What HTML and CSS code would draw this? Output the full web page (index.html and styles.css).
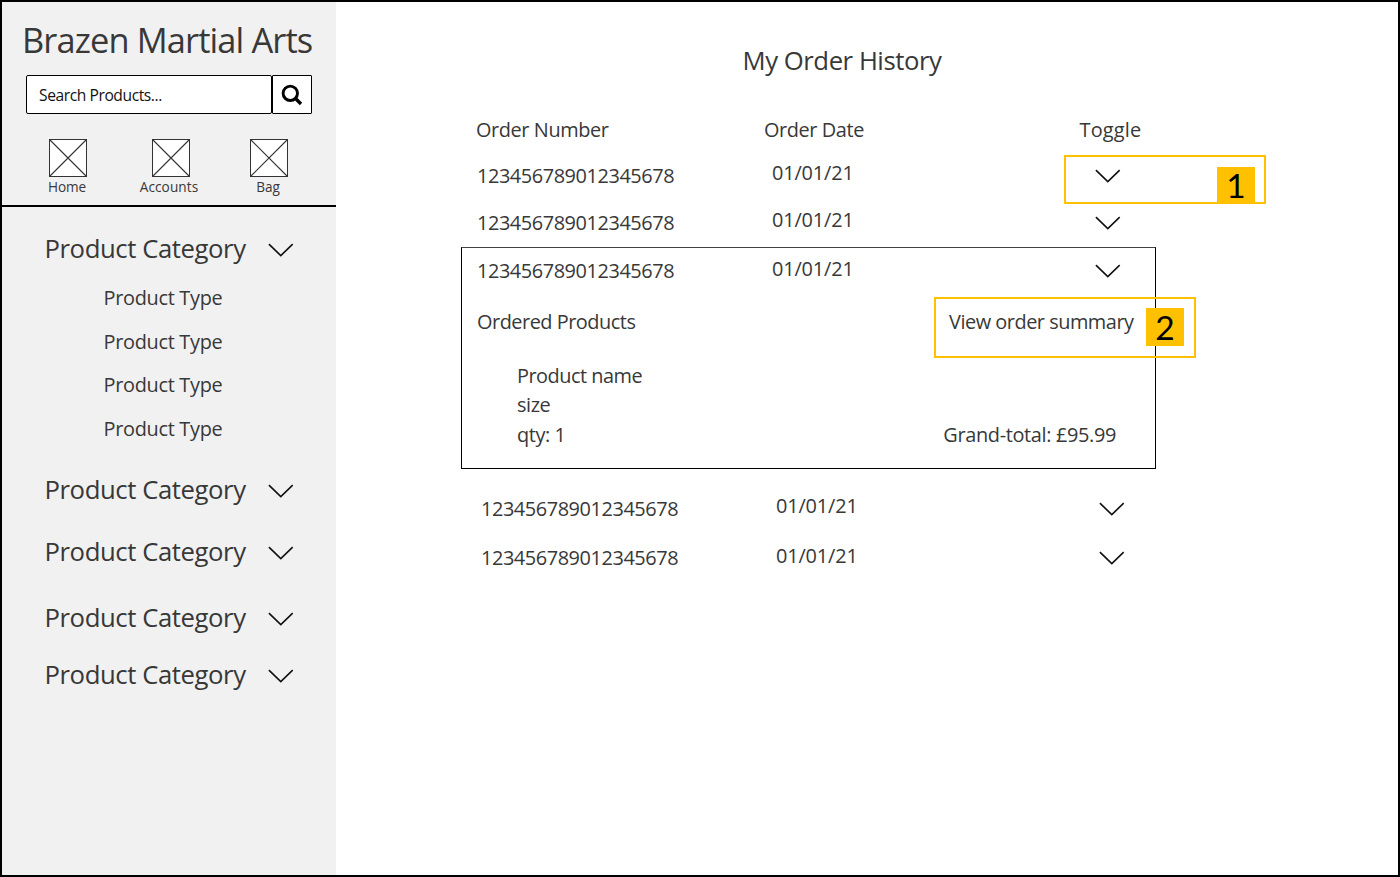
FILE: index.html
```html
<!DOCTYPE html>
<html lang="en">
<head>
<meta charset="utf-8">
<title>My Order History</title>
<link rel="stylesheet" href="styles.css">
</head>
<body>
<svg class="defs" width="0" height="0">
  <symbol id="chevron" viewBox="0 0 26 14"><path d="M0.9 1.2 L12.8 12.6 L24.7 1.2" fill="none" stroke="#111" stroke-width="1.6"/></symbol>
  <symbol id="box" viewBox="0 0 38 38"><rect x="0.5" y="0.5" width="37" height="37" fill="#fff" stroke="#333"/><path d="M0.5 0.5 L37.5 37.5 M37.5 0.5 L0.5 37.5" stroke="#333" stroke-width="1.1"/></symbol>
</svg>
<div class="frame">
  <aside class="sidebar">
    <header class="brand">
      <h1 class="brand-name">Brazen Martial Arts</h1>
      <div class="search">
        <div class="search-field"><span class="search-text">Search Products...</span></div>
        <div class="search-button">
          <svg width="22" height="22" viewBox="0 0 22 22"><circle cx="9.3" cy="9.3" r="7.2" fill="none" stroke="#000" stroke-width="2.9"/><path d="M14.3 14.3 L20 20" stroke="#000" stroke-width="3.4"/></svg>
        </div>
      </div>
      <nav class="shortcuts">
        <div class="shortcut home"><svg width="38" height="38"><use href="#box"/></svg><span class="label">Home</span></div>
        <div class="shortcut accounts"><svg width="38" height="38"><use href="#box"/></svg><span class="label">Accounts</span></div>
        <div class="shortcut bag"><svg width="38" height="38"><use href="#box"/></svg><span class="label">Bag</span></div>
      </nav>
    </header>
    <nav class="categories">
      <div class="category"><span>Product Category</span><svg class="chev"><use href="#chevron"/></svg></div>
      <ul class="types">
        <li>Product Type</li>
        <li>Product Type</li>
        <li>Product Type</li>
        <li>Product Type</li>
      </ul>
      <div class="category second"><span>Product Category</span><svg class="chev"><use href="#chevron"/></svg></div>
      <div class="category third"><span>Product Category</span><svg class="chev"><use href="#chevron"/></svg></div>
      <div class="category fourth"><span>Product Category</span><svg class="chev"><use href="#chevron"/></svg></div>
      <div class="category fifth"><span>Product Category</span><svg class="chev"><use href="#chevron"/></svg></div>
    </nav>
  </aside>
  <main class="orders">
    <h2 class="title">My Order History</h2>
    <div class="heads"><span>Order Number</span><span class="head-date">Order Date</span><span class="head-toggle">Toggle</span></div>
    <div class="order"><span class="number">123456789012345678</span><span class="date">01/01/21</span><svg class="chev"><use href="#chevron"/></svg>
      <div class="callout callout-toggle"><span class="badge">1</span></div>
    </div>
    <div class="order"><span class="number">123456789012345678</span><span class="date">01/01/21</span><svg class="chev"><use href="#chevron"/></svg></div>
    <section class="expanded">
      <div class="order open"><span class="number">123456789012345678</span><span class="date">01/01/21</span><svg class="chev"><use href="#chevron"/></svg></div>
      <div class="summary"><span class="products-label">Ordered Products</span><span class="view">View order summary</span>
        <div class="callout callout-summary"><span class="badge">2</span></div>
      </div>
      <div class="details">
        <div class="product"><div class="product-name">Product name</div><div>size</div><div>qty: 1</div></div>
        <div class="total">Grand-total: £95.99</div>
      </div>
    </section>
    <div class="order late"><span class="number">123456789012345678</span><span class="date">01/01/21</span><svg class="chev"><use href="#chevron"/></svg></div>
    <div class="order late last"><span class="number">123456789012345678</span><span class="date">01/01/21</span><svg class="chev"><use href="#chevron"/></svg></div>
  </main>
</div>
</body>
</html>
```
FILE: styles.css
```css
* { box-sizing: border-box; }
body {
  margin: 0;
  font-family: "Open Sans", "Noto Sans", sans-serif;
  font-size: 19.9px;
  letter-spacing: -0.4px;
  color: #383838;
  white-space: nowrap;
}
.defs { display: block; }
h1, h2, ul { margin: 0; padding: 0; font-weight: 400; list-style: none; }
.frame {
  display: flex;
  width: 1400px;
  height: 877px;
  border: 2px solid #000;
  background: #fff;
}
.chev { display: block; width: 26px; height: 14px; flex: none; }

.sidebar { width: 334px; background: #f1f1f1; }
.brand { height: 205px; border-bottom: 2px solid #000; padding-top: 12px; }
.brand-name {
  height: 52px;
  line-height: 52px;
  padding-left: 20px;
  font-size: 34.4px;
  letter-spacing: -0.88px;
}
.search { display: flex; margin: 9px 0 0 24px; width: 286px; height: 39px; }
.search-field {
  width: 246px;
  border: 1px solid #000;
  border-radius: 2px;
  background: #fff;
  padding-left: 12px;
  line-height: 39px;
  font-size: 15.6px;
  letter-spacing: -0.42px;
  color: #111;
}
.search-button {
  width: 40px;
  border: 1px solid #000;
  border-radius: 1px;
  background: #fff;
  padding: 8px 0 0 8px;
}
.search-button svg { display: block; }
.shortcuts { display: flex; padding: 25px 0 0 36px; }
.shortcut { display: flex; flex-direction: column; align-items: center; width: 60px; }
.shortcut svg { display: block; }
.accounts { margin-left: 43px; }
.bag { margin-left: 38px; }
.label { margin-top: 1px; height: 18px; line-height: 18px; font-size: 13.6px; letter-spacing: -0.1px; margin-left: -2px; }
.accounts .label { letter-spacing: 0.1px; margin-left: -4px; }

.categories { padding: 23px 0 0 42.5px; }
.category {
  display: flex;
  justify-content: space-between;
  align-items: center;
  width: 249px;
  height: 36px;
  font-size: 25.7px;
  letter-spacing: -0.42px;
}
.category .chev { margin-top: 4px; }
.types { padding: 12px 0 0 59px; line-height: 44px; height: 188px; margin-top: -2px; letter-spacing: -0.3px; }
.types li { height: 43.6px; }
.second { margin-top: 19px; }
.third { margin-top: 26px; }
.fourth { margin-top: 30px; }
.fifth { margin-top: 21px; }

.orders { flex: 1; padding: 41px 0 0 125px; }
.title {
  height: 36px;
  line-height: 36px;
  padding-left: 281.5px;
  font-size: 25.7px;
  letter-spacing: -0.45px;
}
.heads {
  display: grid;
  grid-template-columns: 288px 315px 1fr;
  height: 73px;
  padding: 40px 0 0 15px;
  line-height: 22px;
}
.head-toggle { letter-spacing: 0.2px; padding-left: 0.5px; }
.order {
  position: relative;
  display: grid;
  grid-template-columns: 295px 323px 1fr;
  align-items: center;
  height: 47px;
  padding-left: 16px;
}
.number { letter-spacing: -0.42px; }
.date { margin-bottom: 6px; letter-spacing: -0.15px; }
.expanded {
  width: 695px;
  height: 222px;
  margin-top: 1px;
  border: 1px solid #000;
  border-top-color: #444;
}
.order.open { height: 46px; padding-left: 15px; }
.open .number { margin-bottom: 2px; }
.open .date { margin-bottom: 6px; }
.summary {
  position: relative;
  display: grid;
  grid-template-columns: 472px 1fr;
  align-items: center;
  height: 54px;
  padding-left: 15px;
}
.products-label { letter-spacing: -0.48px; }
.view { letter-spacing: -0.47px; }
.details { display: flex; justify-content: space-between; align-items: flex-end; padding: 13px 39px 0 55px; line-height: 29.4px; }
.product-name { letter-spacing: -0.5px; }
.total { letter-spacing: -0.34px; }
.order.late { height: 49px; padding-left: 20px; }
.expanded + .late { margin-top: 15px; }
.last .date { margin-bottom: 4px; }

/* Annotation frames and their numbered badges lie over the wireframe. */
.callout { position: absolute; border: 2px solid #ffc000; }
.callout-toggle { left: 603px; top: 3px; width: 202px; height: 49px; }
.callout-summary { left: 472px; top: 3px; width: 262px; height: 61px; }
.badge {
  position: absolute;
  right: 9px;
  top: 10px;
  width: 38px;
  height: 36px;
  background: #ffc000;
  color: #000;
  font: 33.5px/37px Lato, sans-serif;
  letter-spacing: 0;
  text-align: center;
}
.callout-summary .badge { right: 10px; top: 9px; height: 38px; line-height: 38px; }
```
